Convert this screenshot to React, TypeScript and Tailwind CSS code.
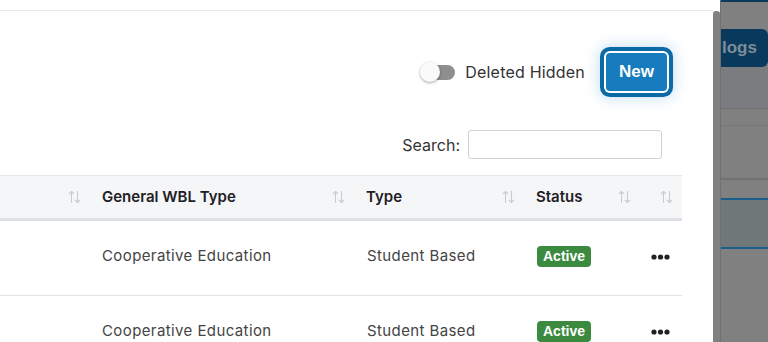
import React from "react";

function SortIcon() {
  return (
    <svg width="13" height="14" viewBox="0 0 13 14" fill="none" stroke="#c9cbce" strokeWidth="1.1">
      <path d="M3.5 13V1.5M1 4l2.5-2.5L6 4" />
      <path d="M9.5 1v11.5M7 10l2.5 2.5L12 10" />
    </svg>
  );
}

function Dots() {
  return (
    <svg width="19" height="6" viewBox="0 0 19 6" fill="#222">
      <circle cx="3" cy="3" r="2.6" />
      <circle cx="9.5" cy="3" r="2.6" />
      <circle cx="16" cy="3" r="2.6" />
    </svg>
  );
}

const cols = "grid grid-cols-[89px_264px_170px_116px_43px]";

function HeadCell({ label }: { label?: string }) {
  return (
    <div className="flex items-center justify-between pl-[13px] pr-[8px]">
      <span>{label}</span>
      <SortIcon />
    </div>
  );
}

function Row() {
  return (
    <div className={`${cols} h-[75px] border-b border-[#e3e4e6] pb-[3px] text-[15px] tracking-[0.4px] text-[#444]`}>
      <div />
      <div className="flex items-center pl-[13px]">Cooperative Education</div>
      <div className="flex items-center pl-[14px]">Student Based</div>
      <div className="flex items-center pl-[14px]">
        <span className="flex h-[21px] items-center rounded-[4px] bg-[#3b8a3f] px-[6px] font-['Liberation_Sans',sans-serif] text-[14px] font-bold tracking-normal text-white">
          Active
        </span>
      </div>
      <div className="flex items-center justify-end pr-[12px]">
        <Dots />
      </div>
    </div>
  );
}

export default function App() {
  return (
    <div className="flex h-[342px] w-[768px] overflow-hidden bg-white font-['Inter',sans-serif]">
      {/* modal content */}
      <div className="flex w-[713px] shrink-0 flex-col">
        <div className="h-[11px] shrink-0 border-b border-[#e8e8e8]" />

        <div className="mt-[42px] flex items-center justify-end pr-[46px]">
          <div className="relative h-[20px] w-[36px]">
            <div className="absolute left-[11px] top-[3px] h-[15px] w-[24px] rounded-full bg-[#8e8e8e]" />
            <div className="absolute left-0 top-0 h-[20px] w-[20px] rounded-full bg-[#fafafa] shadow-[0_1px_3px_rgba(0,0,0,0.35)]" />
          </div>
          <span className="ml-[9px] text-[16px] tracking-[0.2px] text-[#333]">Deleted Hidden</span>
          <button className="ml-[21px] h-[38px] w-[61px] rounded-[4px] bg-[#167cbd] font-['Liberation_Sans',sans-serif] text-[17px] font-bold text-white shadow-[0_0_0_2px_#fff,0_0_0_6px_#0b6aa6,0_0_14px_7px_rgba(60,150,220,0.3)]">
            New
          </button>
        </div>

        <div className="mt-[39px] flex items-center justify-end pr-[51px]">
          <span className="text-[16px] text-[#333]">Search:</span>
          <div className="ml-[8px] h-[29px] w-[194px] rounded-[3px] border border-[#cfd3d8] bg-white" />
        </div>

        <div className="mt-[16px] w-[682px]">
          <div className={`${cols} h-[46px] border-t border-[#e6e7e9] border-b-[3px] border-b-[#dee1e5] bg-[#f5f6f8] text-[15px] font-semibold text-[#1e2125]`}>
            <HeadCell />
            <HeadCell label="General WBL Type" />
            <HeadCell label="Type" />
            <HeadCell label="Status" />
            <div className="flex items-center justify-end pr-[9px]">
              <SortIcon />
            </div>
          </div>
          <Row />
          <Row />
        </div>
      </div>

      {/* scrollbar */}
      <div className="mt-[11px] w-[7px] shrink-0 rounded-t-[3px] bg-[#808080]" />

      {/* dimmed page behind */}
      <div className="flex w-[48px] shrink-0 flex-col border-l border-[#707070] bg-[#808080]">
        <div className="h-[2px] bg-[#0b3a5a]" />
        <div className="h-[27px]" />
        <div className="flex h-[38px] items-center rounded-r-[6px] bg-[#093a5d] font-['Liberation_Sans',sans-serif] text-[17px] font-bold text-[#7e8c97]">
          <span className="pl-[1px]">logs</span>
        </div>
        <div className="h-[42px] border-b border-[#727272] bg-[#7b7c80]" />
        <div className="h-[17px] border-b border-[#767676]" />
        <div className="h-[54px] border-b-2 border-[#717171]" />
        <div className="h-[20px] border-b-2 border-[#1a5e8c]" />
        <div className="h-[49px] border-b-2 border-[#1a5e8c] bg-[#6f7779]" />
      </div>
    </div>
  );
}
